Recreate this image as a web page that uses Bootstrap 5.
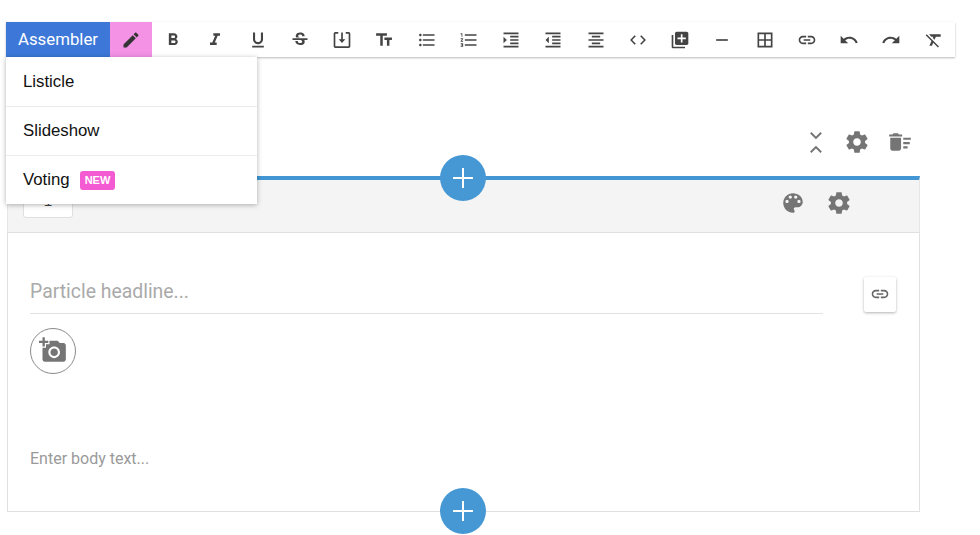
<!DOCTYPE html>
<html lang="en">
<head>
    <meta charset="UTF-8">
    <title>Assembler</title>
    <link href="https://cdn.jsdelivr.net/npm/bootstrap@5.3.3/dist/css/bootstrap.min.css" rel="stylesheet">
    <style>
        body {
            background: #fff;
            overflow: hidden;
            height: 535px;
            font-family: Roboto, "Liberation Sans", sans-serif;
        }

        svg { display: block; fill: currentColor; }

        .page-wrap { position: relative; padding: 22px 0 0 6px; }

        /* toolbar */
        .edit-bar {
            width: 949px;
            height: 35px;
            box-shadow: 0 1px 2px rgba(0, 0, 0, .28);
            color: #444;
        }
        .btn-assembler {
            width: 104px;
            background: #3d78d8;
            color: #fff;
            font-size: 16.8px;
        }
        .btn-pencil { width: 42px; background: #f492e6; color: #333; }
        .tool-btn { width: 42.25px; }
        .tool-btn svg { width: 20px; height: 20px; }
        .btn-pencil svg { width: 20px; height: 20px; }

        /* dropdown */
        .assembler-menu {
            position: absolute;
            left: 6px;
            top: 57px;
            width: 251px;
            z-index: 5;
            box-shadow: 0 1px 5px rgba(0, 0, 0, .3);
            font-family: "Liberation Sans", sans-serif;
            font-size: 16.8px;
            color: #111;
        }
        .menu-row { height: 49.5px; padding-left: 17px; border-bottom: 1px solid #ececec; }
        .menu-row:last-child { height: 48px; border-bottom: 0; }
        .new-tag {
            background: #f45ad2;
            color: #fff;
            font-size: 11px;
            font-weight: 700;
            padding: 3px 5px;
            border-radius: 3px;
            margin-left: 10px;
            line-height: 13px;
        }

        /* particle */
        .particle { width: 913px; margin-left: 1px; color: #757575; }
        .top-actions { height: 49px; padding: 0 7px 0 0; margin-top: 72px; gap: 17px; }
        .top-actions svg { width: 26px; height: 26px; }
        .particle-head {
            height: 56px;
            background: #f4f4f4;
            border-top: 4px solid #4296d3;
            border-right: 1px solid #e6e6e6;
            border-left: 1px solid #e6e6e6;
            padding: 0 67px 0 15px;
            margin-top: -2px;
        }
        .num-box {
            width: 50px;
            height: 38px;
            padding-top: 6px;
            background: #fff;
            border: 1px solid #e0e0e0;
            border-radius: 3px;
            color: #444;
            font-family: "Liberation Mono", monospace;
            font-size: 14px;
            line-height: 14px;
        }
        .head-icons { gap: 20px; margin-top: -7px; }
        .head-icons svg { width: 26px; height: 26px; }

        .particle-body {
            position: relative;
            height: 280px;
            border: 1px solid #e0e0e0;
            padding: 41px 22px 0 22px;
        }
        .headline-row { height: 40px; width: 793px; border-bottom: 1px solid #e2e2e2; font-size: 19.4px; color: #aaa; line-height: 36px; }
        .link-box {
            position: absolute;
            right: 23px;
            top: 44px;
            width: 32px;
            height: 35px;
            background: #fff;
            border-radius: 2px;
            box-shadow: 0 1px 3px rgba(0, 0, 0, .3);
            color: #666;
        }
        .link-box svg { width: 20px; height: 20px; margin-top: -2px; }
        .photo-btn {
            width: 46px;
            height: 46px;
            margin-top: 14px;
            border: 1px solid #8a8a8a;
            border-radius: 50%;
        }
        .photo-btn svg { width: 28px; height: 28px; margin: -2px 0 0 -1px; }
        .body-hint { margin-top: 75px; font-size: 16px; line-height: 20px; color: #9a9a9a; }

        .add-btn {
            position: absolute;
            left: 440px;
            width: 46px;
            height: 46px;
            background: #4698d4;
            border-radius: 50%;
            color: #fff;
            z-index: 3;
        }
        .add-btn svg { width: 24px; height: 24px; }
        .add-top { top: 155px; }
        .add-bottom { top: 488px; }
    </style>
</head>
<body>
    <div class="page-wrap">
        <!-- Toolbar -->
        <div class="edit-bar d-flex bg-white">
            <div class="btn-assembler d-flex align-items-center justify-content-center">Assembler</div>
            <div class="btn-pencil d-flex align-items-center justify-content-center">
                <svg viewBox="0 0 24 24"><path d="M3 17.25V21h3.75L17.81 9.94l-3.75-3.75L3 17.25zM20.71 7.04c.39-.39.39-1.02 0-1.41l-2.34-2.34c-.39-.39-1.02-.39-1.41 0l-1.83 1.83 3.75 3.75 1.83-1.83z"/></svg>
            </div>
            <div class="tool-btn d-flex align-items-center justify-content-center"><svg viewBox="0 0 24 24"><path d="M15.6 10.79c.97-.67 1.65-1.77 1.65-2.79 0-2.26-1.75-4-4-4H7v14h7.04c2.09 0 3.71-1.7 3.71-3.79 0-1.52-.86-2.82-2.15-3.42zM10 6.5h3c.83 0 1.5.67 1.5 1.5s-.67 1.5-1.5 1.5h-3v-3zm3.5 9H10v-3h3.5c.83 0 1.5.67 1.5 1.5s-.67 1.5-1.5 1.5z"/></svg></div>
            <div class="tool-btn d-flex align-items-center justify-content-center"><svg viewBox="0 0 24 24"><path d="M10 4v3h2.21l-3.42 8H6v3h8v-3h-2.21l3.42-8H18V4z"/></svg></div>
            <div class="tool-btn d-flex align-items-center justify-content-center"><svg viewBox="0 0 24 24"><path d="M12 17c3.31 0 6-2.69 6-6V3h-2.5v8c0 1.93-1.57 3.5-3.5 3.5S8.5 12.93 8.5 11V3H6v8c0 3.31 2.69 6 6 6zm-7 2v2h14v-2H5z"/></svg></div>
            <div class="tool-btn d-flex align-items-center justify-content-center"><svg viewBox="0 0 24 24"><path d="M6.85 7.08C6.85 4.37 9.45 3 12.24 3c1.64 0 3 .49 3.9 1.28.77.65 1.46 1.73 1.46 3.24h-3.01c0-.31-.05-.59-.15-.85-.29-.86-1.2-1.28-2.25-1.28-1.86 0-2.34 1.02-2.34 1.7 0 .48.25.88.74 1.21.38.25.77.48 1.41.7H7.39c-.21-.34-.54-.89-.54-1.92zM21 12v-2H3v2h9.62c1.15.45 1.96.75 1.96 1.97 0 1-.81 1.67-2.28 1.67-1.54 0-2.93-.54-2.93-2.51H6.4c0 .55.08 1.13.24 1.58.81 2.29 3.29 3.3 5.67 3.3 2.27 0 5.3-.89 5.3-4.05 0-.3-.01-1.16-.48-1.94H21V12z"/></svg></div>
            <div class="tool-btn d-flex align-items-center justify-content-center"><svg viewBox="0 0 24 24"><path d="M7.5 2.5H4C2.900 2.500 2 3.400 2 4.500v15c0 1.100.9 2 2 2h16c1.100 0 2-.9 2-2v-15c0-1.100-.9-2-2-2h-3.500v2H20v15H4v-15h3.500zM11 3h2v8h3l-4 4.500L8 11h3z"/></svg></div>
            <div class="tool-btn d-flex align-items-center justify-content-center"><svg viewBox="0 0 24 24"><path d="M2.500 4v3h5v12h3V7h5V4h-13zm19 5h-9v3h3v7h3v-7h3V9z"/></svg></div>
            <div class="tool-btn d-flex align-items-center justify-content-center"><svg viewBox="0 0 24 24"><path d="M4 10.500c-.83 0-1.500.67-1.500 1.500s.67 1.500 1.500 1.500 1.500-.67 1.500-1.500-.67-1.500-1.500-1.500zm0-6c-.83 0-1.500.67-1.500 1.500S3.170 7.500 4 7.500 5.500 6.830 5.500 6 4.830 4.500 4 4.500zm0 12c-.83 0-1.500.68-1.500 1.500s.68 1.500 1.500 1.500 1.500-.68 1.500-1.500-.67-1.500-1.500-1.500zM7 19h14v-2H7v2zm0-6h14v-2H7v2zm0-8v2h14V5H7z"/></svg></div>
            <div class="tool-btn d-flex align-items-center justify-content-center"><svg viewBox="0 0 24 24"><path d="M2 17h2v.5H3v1h1v.5H2v1h3v-4H2v1zm1-9h1V4H2v1h1v3zm-1 3h1.800L2 13.100v.9h3v-1H3.200L5 10.900V10H2v1zm5-6v2h14V5H7zm0 14h14v-2H7v2zm0-6h14v-2H7v2z"/></svg></div>
            <div class="tool-btn d-flex align-items-center justify-content-center"><svg viewBox="0 0 24 24"><path d="M3 21h18v-2H3v2zM3 8v8l4-4-4-4zm8 9h10v-2H11v2zM3 3v2h18V3H3zm8 6h10V7H11v2zm0 4h10v-2H11v2z"/></svg></div>
            <div class="tool-btn d-flex align-items-center justify-content-center"><svg viewBox="0 0 24 24"><path d="M11 17h10v-2H11v2zm-8-5l4 4V8l-4 4zm0 9h18v-2H3v2zM3 3v2h18V3H3zm8 6h10V7H11v2zm0 4h10v-2H11v2z"/></svg></div>
            <div class="tool-btn d-flex align-items-center justify-content-center"><svg viewBox="0 0 24 24"><path d="M7 15v2h10v-2H7zm-4 6h18v-2H3v2zm0-8h18v-2H3v2zm4-6v2h10V7H7zM3 3v2h18V3H3z"/></svg></div>
            <div class="tool-btn d-flex align-items-center justify-content-center"><svg viewBox="0 0 24 24"><path d="M9.400 16.600L5 12l4.400-4.600L8 6.200 2.500 12 8 17.800zm5.200 0L19 12l-4.400-4.600L16 6.200l5.500 5.800-5.500 5.800z"/></svg></div>
            <div class="tool-btn d-flex align-items-center justify-content-center"><svg viewBox="0 0 24 24"><path d="M4 6H2v14c0 1.100.9 2 2 2h14v-2H4V6zm16-4H8c-1.100 0-2 .9-2 2v12c0 1.100.9 2 2 2h12c1.100 0 2-.9 2-2V4c0-1.100-.9-2-2-2zm-1 9h-4v4h-2v-4H9V9h4V5h2v4h4v2z"/></svg></div>
            <div class="tool-btn d-flex align-items-center justify-content-center"><svg viewBox="0 0 24 24"><path d="M19 13H5v-2h14v2z"/></svg></div>
            <div class="tool-btn d-flex align-items-center justify-content-center"><svg viewBox="0 0 24 24"><path d="M3 3v18h18V3H3zm8 16H5v-6h6v6zm0-8H5V5h6v6zm8 8h-6v-6h6v6zm0-8h-6V5h6v6z"/></svg></div>
            <div class="tool-btn d-flex align-items-center justify-content-center"><svg viewBox="0 0 24 24"><path d="M3.900 12c0-1.710 1.390-3.100 3.100-3.100h4V7H7c-2.760 0-5 2.240-5 5s2.240 5 5 5h4v-1.900H7c-1.710 0-3.100-1.390-3.100-3.100zM8 13h8v-2H8v2zm9-6h-4v1.900h4c1.710 0 3.100 1.390 3.100 3.100s-1.390 3.100-3.100 3.100h-4V17h4c2.760 0 5-2.240 5-5s-2.240-5-5-5z"/></svg></div>
            <div class="tool-btn d-flex align-items-center justify-content-center"><svg viewBox="0 0 24 24"><path d="M12.500 8c-2.650 0-5.050.99-6.900 2.600L2 7v9h9l-3.620-3.620c1.390-1.160 3.160-1.880 5.120-1.880 3.540 0 6.550 2.310 7.600 5.500l2.370-.78C21.080 11.030 17.150 8 12.500 8z"/></svg></div>
            <div class="tool-btn d-flex align-items-center justify-content-center"><svg viewBox="0 0 24 24"><path d="M18.400 10.600C16.550 8.990 14.150 8 11.500 8c-4.650 0-8.580 3.030-9.960 7.220L3.900 16c1.050-3.190 4.050-5.500 7.600-5.500 1.950 0 3.730.72 5.120 1.880L13 16h9V7l-3.600 3.600z"/></svg></div>
            <div class="tool-btn d-flex align-items-center justify-content-center"><svg viewBox="0 0 24 24"><path d="M3.270 5L2 6.270l6.970 6.970L6.500 19h3l1.570-3.660L16.730 21 18 19.730 3.550 5.270 3.270 5zM6 5v.18L8.820 8h2.400l-.72 1.680 2.100 2.100L14.210 8H20V5H6z"/></svg></div>
        </div>

        <!-- Assembler dropdown -->
        <div class="assembler-menu bg-white">
            <div class="menu-row d-flex align-items-center">Listicle</div>
            <div class="menu-row d-flex align-items-center">Slideshow</div>
            <div class="menu-row d-flex align-items-center">Voting <span class="new-tag">NEW</span></div>
        </div>

        <!-- Particle -->
        <div class="particle">
            <div class="top-actions d-flex justify-content-end">
                <svg viewBox="0 0 24 24"><path d="M9 3.500l4.800 4.800 4.800-4.800M9 21.500l4.800-4.800 4.800 4.800" fill="none" stroke="currentColor" stroke-width="1.800"/></svg>
                <svg viewBox="0 0 24 24"><path d="M19.430 12.980c.04-.32.07-.64.07-.98s-.03-.66-.07-.98l2.110-1.650c.19-.15.24-.42.12-.64l-2-3.460c-.12-.22-.39-.3-.61-.22l-2.490 1c-.52-.4-1.080-.73-1.690-.98l-.38-2.650C14.460 2.180 14.250 2 14 2h-4c-.25 0-.46.18-.49.42l-.38 2.650c-.61.25-1.170.59-1.690.98l-2.490-1c-.23-.09-.49 0-.61.22l-2 3.460c-.13.22-.07.49.12.64l2.110 1.650c-.04.32-.07.65-.07.98s.03.66.07.98l-2.110 1.650c-.19.15-.24.42-.12.64l2 3.460c.12.22.39.3.61.22l2.490-1c.52.4 1.080.73 1.690.98l.38 2.650c.03.24.24.42.49.42h4c.25 0 .46-.18.49-.42l.38-2.650c.61-.25 1.170-.59 1.690-.98l2.490 1c.23.09.49 0 .61-.22l2-3.460c.12-.22.07-.49-.12-.64l-2.110-1.650zM12 15.500c-1.930 0-3.500-1.570-3.500-3.500s1.570-3.500 3.500-3.500 3.500 1.570 3.500 3.500-1.570 3.500-3.500 3.500z"/></svg>
                <svg viewBox="0 0 24 24"><path d="M15 16h4v2h-4zm0-8h7v2h-7zm0 4h6v2h-6zM3 18c0 1.100.9 2 2 2h6c1.100 0 2-.9 2-2V8H3v10zM14 5h-3l-1-1H6L5 5H2v2h12z"/></svg>
            </div>
            <div class="particle-head d-flex justify-content-between">
                <div class="num-box d-flex align-items-center justify-content-center">1</div>
                <div class="head-icons d-flex align-items-center">
                    <svg viewBox="0 0 24 24"><path d="M12 3c-4.970 0-9 4.030-9 9s4.030 9 9 9c.83 0 1.500-.67 1.500-1.500 0-.39-.15-.74-.39-1.010-.23-.26-.38-.61-.38-.99 0-.83.67-1.500 1.500-1.500H16c2.760 0 5-2.240 5-5 0-4.420-4.030-8-9-8zm-5.500 9c-.83 0-1.500-.67-1.500-1.500S5.670 9 6.500 9 8 9.670 8 10.500 7.330 12 6.500 12zm3-4C8.670 8 8 7.330 8 6.500S8.670 5 9.500 5s1.500.67 1.500 1.500S10.330 8 9.500 8zm5 0c-.83 0-1.500-.67-1.500-1.500S13.670 5 14.500 5s1.500.67 1.500 1.500S15.330 8 14.500 8zm3 4c-.83 0-1.500-.67-1.500-1.500S16.670 9 17.500 9s1.500.67 1.500 1.500-.67 1.500-1.500 1.500z"/></svg>
                    <svg viewBox="0 0 24 24"><path d="M19.430 12.980c.04-.32.07-.64.07-.98s-.03-.66-.07-.98l2.110-1.650c.19-.15.24-.42.12-.64l-2-3.460c-.12-.22-.39-.3-.61-.22l-2.490 1c-.52-.4-1.080-.73-1.690-.98l-.38-2.650C14.460 2.180 14.250 2 14 2h-4c-.25 0-.46.18-.49.42l-.38 2.650c-.61.25-1.170.59-1.690.98l-2.490-1c-.23-.09-.49 0-.61.22l-2 3.460c-.13.22-.07.49.12.64l2.110 1.650c-.04.32-.07.65-.07.98s.03.66.07.98l-2.110 1.650c-.19.15-.24.42-.12.64l2 3.460c.12.22.39.3.61.22l2.490-1c.52.4 1.080.73 1.690.98l.38 2.650c.03.24.24.42.49.42h4c.25 0 .46-.18.49-.42l.38-2.650c.61-.25 1.170-.59 1.690-.98l2.490 1c.23.09.49 0 .61-.22l2-3.460c.12-.22.07-.49-.12-.64l-2.110-1.650zM12 15.500c-1.930 0-3.500-1.570-3.500-3.500s1.570-3.500 3.500-3.500 3.500 1.570 3.500 3.500-1.570 3.500-3.500 3.500z"/></svg>
                </div>
            </div>
            <div class="particle-body">
                <div class="headline-row">Particle headline...</div>
                <div class="link-box d-flex align-items-center justify-content-center">
                    <svg viewBox="0 0 24 24"><path d="M3.900 12c0-1.710 1.390-3.100 3.100-3.100h4V7H7c-2.760 0-5 2.240-5 5s2.240 5 5 5h4v-1.900H7c-1.710 0-3.100-1.390-3.100-3.100zM8 13h8v-2H8v2zm9-6h-4v1.900h4c1.710 0 3.100 1.390 3.100 3.100s-1.390 3.100-3.100 3.100h-4V17h4c2.760 0 5-2.240 5-5s-2.240-5-5-5z"/></svg>
                </div>
                <div class="photo-btn d-flex align-items-center justify-content-center">
                    <svg viewBox="0 0 24 24"><path d="M3 4V1h2v3h3v2H5v3H3V6H0V4h3zm3 6V7h3V4h7l1.830 2H21c1.100 0 2 .9 2 2v12c0 1.100-.9 2-2 2H5c-1.100 0-2-.9-2-2V10h3zm7 9c2.760 0 5-2.240 5-5s-2.240-5-5-5-5 2.240-5 5 2.240 5 5 5zm-3.200-5c0 1.770 1.430 3.200 3.200 3.200s3.200-1.430 3.200-3.200-1.430-3.200-3.200-3.200-3.200 1.430-3.200 3.200z"/></svg>
                </div>
                <div class="body-hint">Enter body text...</div>
            </div>
        </div>

        <!-- Add particle buttons -->
        <div class="add-btn add-top d-flex align-items-center justify-content-center">
            <svg viewBox="0 0 24 24"><path d="M2 11h9V2h2v9h9v2h-9v9h-2v-9H2z"/></svg>
        </div>
        <div class="add-btn add-bottom d-flex align-items-center justify-content-center">
            <svg viewBox="0 0 24 24"><path d="M2 11h9V2h2v9h9v2h-9v9h-2v-9H2z"/></svg>
        </div>
    </div>

    <script src="https://cdn.jsdelivr.net/npm/bootstrap@5.3.3/dist/js/bootstrap.bundle.min.js"></script>
</body>
</html>
